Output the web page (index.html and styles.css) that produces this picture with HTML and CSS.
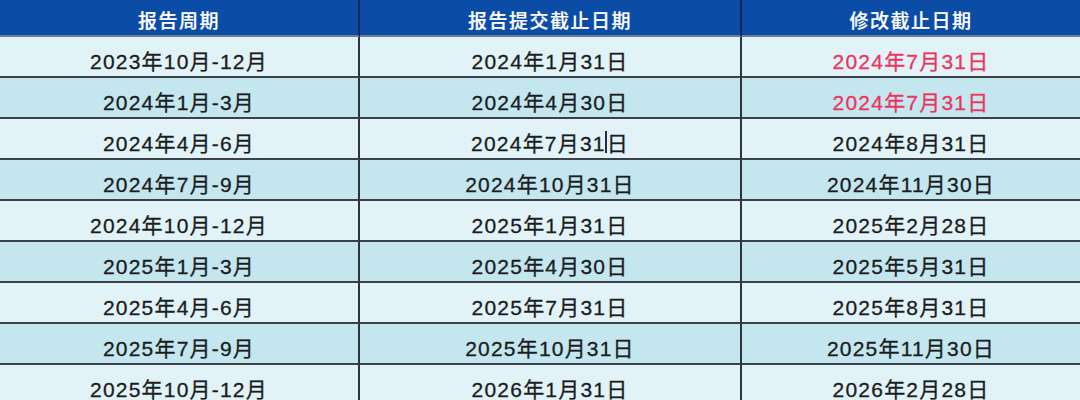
FILE: index.html
```html
<!DOCTYPE html>
<html lang="zh-CN">
<head>
<meta charset="utf-8">
<link rel="stylesheet" href="styles.css">
</head>
<body>
<div class="table">
  <div class="cell head">报告周期</div>
  <div class="cell head">报告提交截止日期</div>
  <div class="cell head last">修改截止日期</div>

  <div class="cell odd">2023年10月-12月</div>
  <div class="cell odd">2024年1月31日</div>
  <div class="cell odd last red">2024年7月31日</div>

  <div class="cell even">2024年1月-3月</div>
  <div class="cell even">2024年4月30日</div>
  <div class="cell even last red">2024年7月31日</div>

  <div class="cell odd">2024年4月-6月</div>
  <div class="cell odd">2024年7月31<span class="caret"></span>日</div>
  <div class="cell odd last">2024年8月31日</div>

  <div class="cell even">2024年7月-9月</div>
  <div class="cell even">2024年10月31日</div>
  <div class="cell even last">2024年11月30日</div>

  <div class="cell odd">2024年10月-12月</div>
  <div class="cell odd">2025年1月31日</div>
  <div class="cell odd last">2025年2月28日</div>

  <div class="cell even">2025年1月-3月</div>
  <div class="cell even">2025年4月30日</div>
  <div class="cell even last">2025年5月31日</div>

  <div class="cell odd">2025年4月-6月</div>
  <div class="cell odd">2025年7月31日</div>
  <div class="cell odd last">2025年8月31日</div>

  <div class="cell even">2025年7月-9月</div>
  <div class="cell even">2025年10月31日</div>
  <div class="cell even last">2025年11月30日</div>

  <div class="cell odd">2025年10月-12月</div>
  <div class="cell odd">2026年1月31日</div>
  <div class="cell odd last">2026年2月28日</div>
</div>
</body>
</html>
```

FILE: styles.css
```css
html, body {
  margin: 0;
  padding: 0;
  width: 1080px;
  height: 400px;
  overflow: hidden;
  background: #e3f3f8;
}
.table {
  display: grid;
  grid-template-columns: 360px 382px 1fr;
  grid-auto-rows: 41px;
  grid-template-rows: 37px;
  font-family: "Liberation Sans", "Noto Sans CJK SC", sans-serif;
}
.cell {
  box-sizing: border-box;
  display: flex;
  align-items: center;
  justify-content: center;
  border-bottom: 2px solid #3b4148;
  border-right: 2px solid #2f343a;
  font-size: 21px;
  letter-spacing: 1.2px;
  color: #1b1c1e;
  padding-top: 7px;
  -webkit-text-stroke: 0.3px currentColor;
}
.cell.last {
  border-right: none;
}
.head {
  background: #0b4ca6;
  color: #ffffff;
  font-size: 19px;
  font-weight: 500;
  letter-spacing: 1.5px;
  padding-top: 4px;
  border-bottom-color: #6c7c93;
  border-right-color: #0a2a55;
  -webkit-text-stroke: 0.2px currentColor;
}
.odd {
  background: #e2f3f8;
}
.even {
  background: #c3e6ef;
}
.red {
  color: #ec3460;
}
.caret {
  display: inline-block;
  width: 2px;
  height: 22px;
  background: #2a2d31;
  margin: 0 0 0 -1px;
  vertical-align: middle;
}
```
